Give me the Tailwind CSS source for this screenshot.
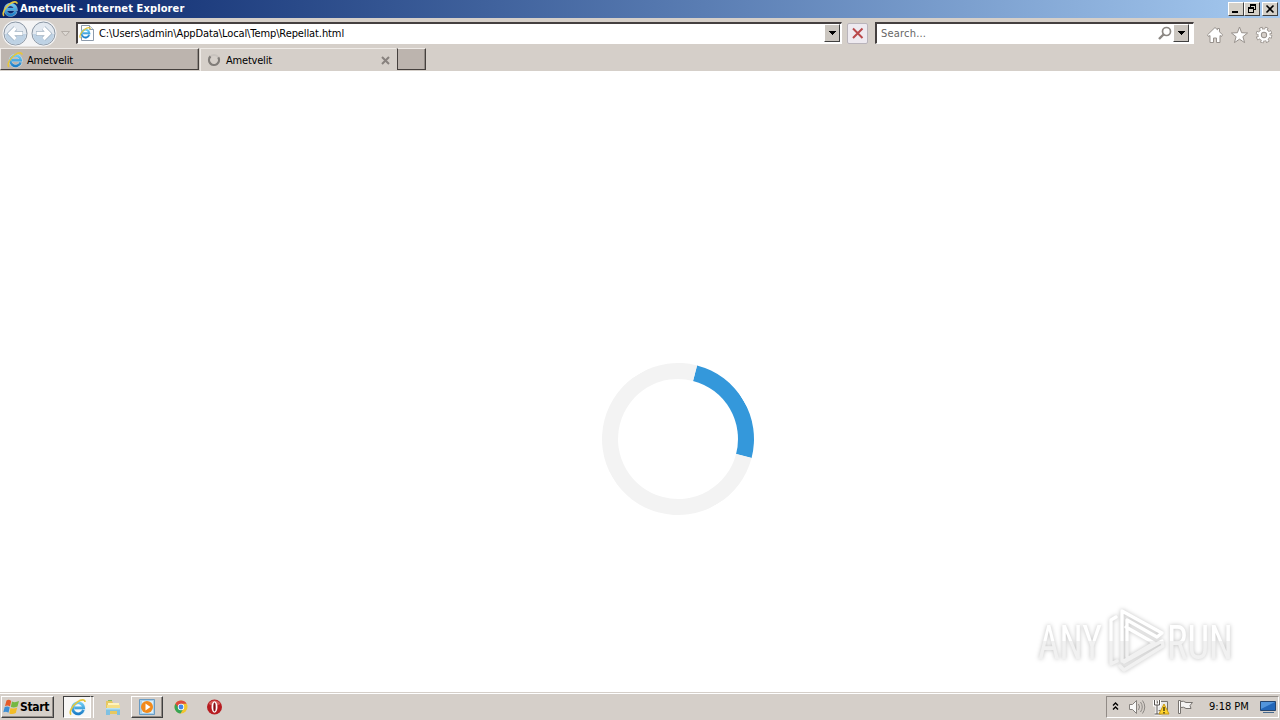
<!DOCTYPE html>
<html lang="en">
<head>
  <meta charset="UTF-8">
  <meta name="viewport" content="width=device-width, initial-scale=1.0">
  <title>Ametvelit - Internet Explorer</title>
  <script src="https://cdn.jsdelivr.net/npm/@tailwindcss/browser@4"></script>
</head>
<body class="bg-white">
  <!-- Shared icons -->
  <svg class="absolute size-0">
    <defs>
      <linearGradient id="ie-blue" x1="0" y1="0" x2="0" y2="1">
        <stop offset="0" stop-color="#6ccbf4"/><stop offset="1" stop-color="#1e7fc8"/>
      </linearGradient>
    </defs>
    <symbol id="ie" viewBox="0 0 16 16">
      <path d="M13.800 10.300A5.300 5.300 0 1 1 14 8.400H5" fill="none" stroke="#d6effb" stroke-width="3.400" opacity=".6"/>
      <path d="M13.600 10.300A5.200 5.200 0 1 1 13.800 8.300H5" fill="none" stroke="url(#ie-blue)" stroke-width="2.500"/>
      <path d="M2 14.800C-.4 12.600 3 6.200 7.800 2.900 11.400.4 15.200.1 15 2.800" fill="none" stroke="#e6c63c" stroke-width="1.600"/>
    </symbol>
  </svg>

  <div class="flex h-[720px] w-[1280px] flex-col overflow-hidden font-['DejaVu_Sans_Condensed','DejaVu_Sans',sans-serif] text-[11px] text-black [font-stretch:condensed]">
    <!-- Title bar -->
    <div class="flex h-[18px] shrink-0 items-center bg-linear-to-r from-[#0a246a] to-[#a6caf0] pr-[2px] pl-[2px]">
      <svg class="size-4"><use href="#ie"/></svg>
      <span id="title" class="mt-px ml-[2px] font-bold tracking-[0.12px] whitespace-nowrap text-white">Ametvelit - Internet Explorer</span>
      <div class="ml-auto flex">
        <div class="h-[14px] w-4 border border-t-white border-r-[#404040] border-b-[#404040] border-l-white bg-[#d4d0c8]">
          <svg class="h-3 w-[14px]" shape-rendering="crispEdges"><path d="M3 8h6v2H3z"/></svg>
        </div>
        <div class="h-[14px] w-4 border border-t-white border-r-[#404040] border-b-[#404040] border-l-white bg-[#d4d0c8]">
          <svg class="h-3 w-[14px]" shape-rendering="crispEdges"><path d="M5 1h6v6H9V6h1V3H6v1H5zM3 4h6v6H3zM4 6v3h4V6z" fill-rule="evenodd"/></svg>
        </div>
        <div class="ml-[2px] h-[14px] w-4 border border-t-white border-r-[#404040] border-b-[#404040] border-l-white bg-[#d4d0c8]">
          <svg class="h-3 w-[14px]"><path d="M3.500 2.500l7 7m0-7l-7 7" stroke="#000" stroke-width="1.600"/></svg>
        </div>
      </div>
    </div>

    <!-- Navigation bar -->
    <div class="flex h-[30px] shrink-0 bg-[#d5cfc9] pl-[2px]">
      <svg class="h-[30px] w-[72px]" viewBox="2 18 72 30" fill="none">
        <rect x="2.500" y="20.500" width="54" height="26" rx="13" fill="#f4f4f5"/>
        <circle cx="15.500" cy="33.500" r="11.500" fill="#e3e9f0" stroke="#8995a3"/>
        <circle cx="43.500" cy="33.500" r="11.500" fill="#e3e9f0" stroke="#8995a3"/>
        <path d="M5 34a10.500 10.500 0 0 0 21 0zM33 34a10.500 10.500 0 0 0 21 0z" fill="#bed2e4"/>
        <path d="M23 33.500H10m5.500-5.500L10 33.500l5.500 5.500" stroke="#9fb0c1" stroke-width="4.800"/>
        <path d="M22.500 33.500H10m5.500-5.500L10 33.500l5.500 5.500" stroke="#fff" stroke-width="3.400"/>
        <path d="M36 33.500h13m-5.500-5.500l5.500 5.500-5.500 5.500" stroke="#9fb0c1" stroke-width="4.800"/>
        <path d="M36.500 33.500h12.500m-5.500-5.500l5.500 5.500-5.500 5.500" stroke="#fff" stroke-width="3.400"/>
        <path d="M61.500 31.500h8l-4 4.500z" fill="#ddd9d4" stroke="#b3ada7"/>
      </svg>
      <div class="mt-1 ml-[2px] flex h-[22px] w-[766px] border-t-2 border-r border-b border-l-2 border-t-[#454040] border-r-white border-b-white border-l-[#454040] bg-white">
        <svg class="mt-px ml-px h-4 w-4" viewBox="0 0 16 16">
          <path d="M2.500.5h8l4 4v11h-12z" fill="#fff" stroke="#8d9aaa"/>
          <path d="M10.500.5v4h4" fill="#e6eef6" stroke="#8d9aaa"/>
          <svg x="0" y="2" width="12" height="12"><use href="#ie"/></svg>
        </svg>
        <span id="url" class="ml-1 leading-[20px] tracking-[-0.1px] whitespace-nowrap">C:\Users\admin\AppData\Local\Temp\Repellat.html</span>
        <div class="mr-px ml-auto h-[18px] w-4 border border-t-white border-r-[#404040] border-b-[#404040] border-l-white bg-[#cbc6c0]">
          <svg class="h-4 w-[14px]" shape-rendering="crispEdges"><path d="M3 6h8L7 10z"/></svg>
        </div>
      </div>
      <div class="mt-[5px] ml-[5px] h-[21px] w-[21px] rounded-[2px] border border-[#b9b4bb] bg-[#eeeaf0]">
        <svg class="size-[19px]"><path d="M5 4.500l9.500 9.500m0-9.500L5 14" stroke="#b9494b" stroke-width="2"/></svg>
      </div>
      <div class="mt-1 ml-[7px] flex h-[22px] w-[319px] border-t-2 border-r border-b border-l-2 border-t-[#454040] border-r-white border-b-white border-l-[#454040] bg-white">
        <span id="search" class="ml-1 leading-[20px] tracking-[0.2px] whitespace-nowrap text-[#666]">Search...</span>
        <svg class="mt-[2px] ml-auto h-[15px] w-4" fill="none" stroke="#8b8783"><circle cx="9.500" cy="5.500" r="4" stroke-width="1.700"/><path d="M6.500 8.500L2 13" stroke-width="2.400"/></svg>
        <div class="mr-[4px] h-[18px] w-4 border border-t-white border-r-[#404040] border-b-[#404040] border-l-white bg-[#cbc6c0]">
          <svg class="h-4 w-[14px]" shape-rendering="crispEdges"><path d="M3 6h8L7 10z"/></svg>
        </div>
      </div>
      <svg class="ml-[10px] h-[30px] w-[74px]" viewBox="1204 18 74 30" fill="#fff" stroke="#97918c" stroke-linejoin="round">
        <path d="M1215 27.500l2.500 2.300v-1.300h2v3.300l3 3-1 1.700-1.500-1v7h-3.500v-4.500h-3v4.500h-3.500v-7l-1.500 1-1-1.700z"/>
        <path d="M1239.500 27l2.100 5.700 6 .3-4.700 3.700 1.700 5.900-5.100-3.400-5.100 3.400 1.700-5.900-4.700-3.700 6-.3z"/>
        <circle cx="1264" cy="35" r="6.300" fill="none" stroke-width="4" stroke-dasharray="2.950 2"/>
        <circle cx="1264" cy="35" r="4.300" fill="none" stroke-width="4.200"/>
        <circle cx="1264" cy="35" r="6" fill="none" stroke="#fff" stroke-width="3" stroke-dasharray="1.700 3.010" stroke-dashoffset="-.5"/>
        <circle cx="1264" cy="35" r="4.400" fill="none" stroke="#fff" stroke-width="2.500"/>
      </svg>
    </div>

    <!-- Tabs -->
    <div class="flex h-[23px] shrink-0 bg-[#d5cfc9]">
      <div class="flex h-[22px] w-[199px] items-center border border-t-[#efebe7] border-r-[#45403d] border-b-[#45403d] border-l-[#efebe7] bg-[#bcb4ae] pl-[6px] shadow-[inset_-1px_0_0_#918b86]">
        <svg class="mt-px size-4"><use href="#ie"/></svg>
        <span id="tab1" class="mt-1 ml-1 tracking-[-0.2px] whitespace-nowrap">Ametvelit</span>
      </div>
      <div class="ml-px flex h-[23px] w-[196px] items-center border-t border-l border-[#efebe7] pl-[6px]">
        <svg class="size-[14px]" fill="none" stroke-width="2.200"><circle cx="7" cy="7" r="5" stroke="#c8c3be"/><path d="M3.500 3.400a5 5 0 1 0 7.800 1" stroke="#817d79"/></svg>
        <span id="tab2" class="mt-[2px] ml-[5px] tracking-[-0.2px] whitespace-nowrap">Ametvelit</span>
        <svg class="mr-[5px] ml-auto size-[11px]"><path d="M2 2l7 7m0-7L2 9" stroke="#88827e" stroke-width="2"/></svg>
      </div>
      <div class="ml-px h-[22px] w-[29px] border border-t-[#efebe7] border-r-[#45403d] border-b-[#45403d] border-l-[#45403d] bg-[#bcb4ae] shadow-[inset_-1px_0_0_#918b86]"></div>
    </div>

    <!-- Page content -->
    <main class="relative h-[621px] shrink-0 bg-white">
      <div class="absolute top-[292px] left-[602px] size-[152px] rotate-[59.500deg] rounded-full border-[16px] border-[#f3f3f3] border-t-[#3498db]"></div>
      <svg class="absolute top-[529px] left-[1020px] h-[90px] w-[260px] overflow-visible drop-shadow-[0_0_2px_rgba(0,0,0,0.25)]" viewBox="0 0 260 90">
        <defs>
          <linearGradient id="shade" x1="0" y1="0" x2="0" y2="80" gradientUnits="userSpaceOnUse">
            <stop offset=".51" stop-color="#fff"/><stop offset=".51" stop-color="#f1f1f1"/>
          </linearGradient>
        </defs>
        <g fill="url(#shade)" font-family="Roboto, sans-serif" font-size="49" font-stretch="condensed">
          <text x="18" y="59" textLength="64" lengthAdjust="spacingAndGlyphs">ANY</text>
          <text x="147" y="59" textLength="66" lengthAdjust="spacingAndGlyphs">RUN</text>
        </g>
        <path d="M96 17l-5 3v44l6-3M102 61V11l40 22-5 4-30-17v37M100 66l4 4 39-24-1-5-38 21M106 27l28 16-30 18" fill="none" stroke="url(#shade)" stroke-width="3.300" stroke-linejoin="round" stroke-linecap="round"/>
      </svg>
    </main>

    <!-- Taskbar -->
    <div class="flex h-7 shrink-0 items-center border-t border-[#d5cfc9] bg-[#d5cfc9] shadow-[inset_0_1px_0_#fff]">
      <div class="mt-px ml-px flex h-[22px] w-[53px] items-center border border-t-white border-r-[#404040] border-b-[#404040] border-l-white pl-px shadow-[inset_-1px_-1px_0_#918b86]">
        <svg class="size-[17px] shrink-0" viewBox="0 0 17 17">
          <path d="M3.500 1.500Q6 0 8.200 2L7 7.500Q4.800 5.800 2 7.100z" fill="#e55b28"/>
          <path d="M9 2.500Q12 4 16 2L14.500 7.500Q11 9.200 7.800 8z" fill="#75b843"/>
          <path d="M1.700 8Q4.500 6.800 6.700 8.300L5.500 13.800Q3 12.100.3 13.300z" fill="#3c8fd5"/>
          <path d="M7.500 8.900Q10.700 10.400 14.200 8.600L12.800 14Q9.500 15.800 6.300 14.500z" fill="#f3bd28"/>
        </svg>
        <span id="start" class="text-[12px] font-bold tracking-[-0.3px] whitespace-nowrap">Start</span>
      </div>
      <div class="mt-px ml-[9px] flex h-[22px] w-[31px]">
        <div class="flex w-7 items-center justify-center border border-t-[#404040] border-r-white border-b-white border-l-[#404040] bg-[#f8f7f6]">
          <svg class="size-[17px]"><use href="#ie"/></svg>
        </div>
        <div class="w-[3px] border-t border-r border-t-[#404040] border-r-white"></div>
      </div>
      <svg class="mt-px ml-[11px] h-[17px] w-4" viewBox="0 0 16 17">
        <path d="M1 2h6l1 2h6v11H1z" fill="#e7c85f"/><path d="M3 4h11v8H3z" fill="#fff4bc"/><path d="M2 6h13v6H2z" fill="#f5df87"/>
        <path d="M1 9h14v7h-3v-4H5v4H1z" fill="#7fc1e2"/><path d="M1 9h14v1.500H1z" fill="#b9e2f2"/><path d="M3 1h4v1H3z" fill="#84be66"/>
      </svg>
      <div class="mt-px ml-[10px] flex h-[22px] w-8 items-center justify-center border border-t-white border-r-[#404040] border-b-[#404040] border-l-white shadow-[inset_-1px_-1px_0_#918b86]">
        <svg class="size-4" viewBox="0 0 16 16"><path d="M.5.5h15v15H.5z" fill="#a9d1ec" stroke="#699bc3"/><path d="M3 2h11v12H3z" fill="#dceffa"/><circle cx="8" cy="8" r="6" fill="#f28a1b"/><path d="M6.500 4.500v7l5-3.500z" fill="#fff"/></svg>
      </div>
      <svg class="ml-[10px] size-4" viewBox="0 0 16 16">
        <circle cx="8" cy="8" r="6.500" fill="#f2c52e"/>
        <path d="M2.400 4.700A6.500 6.500 0 0 0 7.500 14.500L10.500 9.500 8 8z" fill="#36a456"/>
        <path d="M2.400 4.700A6.500 6.500 0 0 1 13.600 4.700H8L5 8z" fill="#dd4b3e"/>
        <circle cx="8" cy="8" r="3.200" fill="#fff"/><circle cx="8" cy="8" r="2.400" fill="#4286e8"/>
      </svg>
      <svg class="ml-[17px] size-4" viewBox="0 0 16 16"><circle cx="8.500" cy="8" r="7.500" fill="#b71c20"/><path d="M2.500 5a6.800 6.800 0 0 1 12 0Q8.500 8 2.500 5" fill="#d45b57"/><ellipse cx="8.500" cy="8" rx="3" ry="5.700" fill="#fff"/><ellipse cx="8.500" cy="8" rx="1.200" ry="4.500" fill="#871014"/></svg>

      <!-- Notification area -->
      <div class="mt-px mr-px ml-auto flex h-[22px] w-[173px] items-center border border-t-[#918b86] border-r-white border-b-white border-l-[#918b86]">
        <svg class="h-5 w-[86px]" viewBox="1107 697 86 20" fill="none">
          <path d="M1113 705.500l2.500-2.500 2.500 2.500m-5 4l2.500-2.500 2.500 2.500" stroke="#000" stroke-width="1.400"/>
          <path d="M1129.500 704.500h3l4-4v13l-4-4h-3z" fill="#f9f9f8" stroke="#85817d"/>
          <path d="M1138.500 704q2 3 0 6m2-8q3.500 5 0 10m2-11.500q4.500 6.500 0 13" stroke="#8c8884"/>
          <path d="M1157.500 701.500h10v9h-10z" fill="#e9e9e7" stroke="#77736f"/>
          <path d="M1154.500 700v5h5v-5m-2.500 5v9m-2.500 0h7" stroke="#fff" stroke-width="3"/>
          <path d="M1154.500 700v5h5v-5m-2.500 5v9m-2.500 0h7" stroke="#55514e"/>
          <path d="M1164 704l5 10h-10z" fill="#ffd42c" stroke="#c99913"/><path d="M1164 707v4m0 1v1.500" stroke="#332a09" stroke-width="1.300"/>
          <path d="M1178.500 700.500h2v13h-2z" fill="#fff" stroke="#77736f"/>
          <path d="M1180.500 701.500q3-1 5.500 1h6.500l-2.500 3 1 3h-5q-2-2-5.500-1z" fill="#f4f3f2" stroke="#77736f"/>
        </svg>
        <span id="clock" class="mt-px ml-4 whitespace-nowrap">9:18 PM</span>
        <svg class="mr-[2px] ml-auto size-4" viewBox="0 0 16 16"><path d="M.5 2.500h15v9H.5z" fill="#2367b9" stroke="#24456f"/><path d="M1 3h14L1 10z" fill="#5295dc"/><path d="M3 13h11v1H3z" fill="#47698e"/></svg>
      </div>
    </div>
  </div>
</body>
</html>
